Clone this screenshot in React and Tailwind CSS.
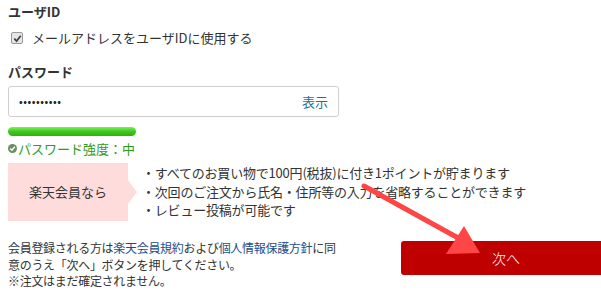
import React from 'react';

const jp = { fontFamily: '"Noto Sans CJK JP", "Noto Sans", sans-serif' };

function Checkbox() {
  return (
    <span className="flex h-[12px] w-[12px] items-center justify-center rounded-[2px] border border-[#9a9a9a] bg-[#e6e6e6]">
      <svg width="9" height="9" viewBox="0 0 10 10">
        <path d="M1.5 5.2 L4 7.8 L8.6 2" fill="none" stroke="#444" strokeWidth="2" />
      </svg>
    </span>
  );
}

function RedArrow() {
  return (
    <svg className="pointer-events-none absolute left-0 top-0" width="601" height="306">
      <line x1="364" y1="186" x2="460" y2="239" stroke="#ff4646" strokeWidth="5" strokeLinecap="round" />
      <polygon points="480,253 446,254 464,226" fill="#ff4646" />
    </svg>
  );
}

export default function App() {
  return (
    <div className="relative h-[306px] w-[601px] overflow-hidden bg-white text-[13px] text-[#333]" style={jp}>
      <div className="flex flex-col pl-[8px] pt-[3px]">
        <h3 className="text-[13px] font-bold leading-[18px]">ユーザID</h3>

        <label className="mt-[8px] flex items-center gap-[9px] pl-[3px] leading-[18px]">
          <Checkbox />
          <span>メールアドレスをユーザIDに使用する</span>
        </label>

        <h3 className="mt-[16px] text-[13px] font-bold leading-[18px]">パスワード</h3>

        <div className="mt-[5px] flex h-[31px] w-[331px] items-center justify-between rounded-[3px] border border-[#cfcfcf] px-[10px]">
          <span className="text-[11px] tracking-[0.5px] text-[#222]">••••••••••</span>
          <span className="text-[13px] text-[#1d6f91]">表示</span>
        </div>

        <div className="mt-[10px] h-[9px] w-[128px] rounded-full bg-gradient-to-b from-[#7ef05a] via-[#3cc91a] to-[#2fb010]" />

        <div className="mt-[4px] flex items-center gap-[1px] leading-[17px] text-[#2f9a1c]">
          <span className="flex h-[9px] w-[9px] items-center justify-center rounded-full bg-[#6b8f63]">
            <svg width="7" height="7" viewBox="0 0 6 6">
              <path d="M1 3 L2.5 4.5 L5 1.5" fill="none" stroke="#fff" strokeWidth="1.2" />
            </svg>
          </span>
          <span>パスワード強度：中</span>
        </div>

        <div className="mt-[6px] flex items-center">
          <div className="flex h-[58px] w-[120px] items-center justify-center bg-[#ffdcdc] text-[13px] text-[#333]">
            楽天会員なら
          </div>
          <div className="h-0 w-0 border-y-[12px] border-l-[9px] border-y-transparent border-l-[#ffdcdc]" />
          <ul className="ml-[5px] flex flex-col leading-[18.5px] tracking-[-0.2px]">
            <li>・すべてのお買い物で100円(税抜)に付き1ポイントが貯まります</li>
            <li>・次回のご注文から氏名・住所等の入力を省略することができます</li>
            <li>・レビュー投稿が可能です</li>
          </ul>
        </div>

        <div className="mt-[19px] flex items-start">
          <p className="w-[336px] shrink-0 whitespace-nowrap text-[12px] leading-[16.5px] tracking-[-0.3px]">
            会員登録される方は<span className="text-[#1b4d8c]">楽天会員規約</span>および<span className="text-[#1b4d8c]">個人情報保護方針</span>に同
            <br />
            意のうえ「次へ」ボタンを押してください。
            <br />
            ※注文はまだ確定されません。
          </p>
          <button className="ml-[57px] mt-[1px] flex h-[34px] w-[210px] shrink-0 items-center justify-center rounded-[3px] bg-[#bf0000] text-[14px] font-light text-white">
            次へ
          </button>
        </div>
      </div>
      <RedArrow />
    </div>
  );
}
